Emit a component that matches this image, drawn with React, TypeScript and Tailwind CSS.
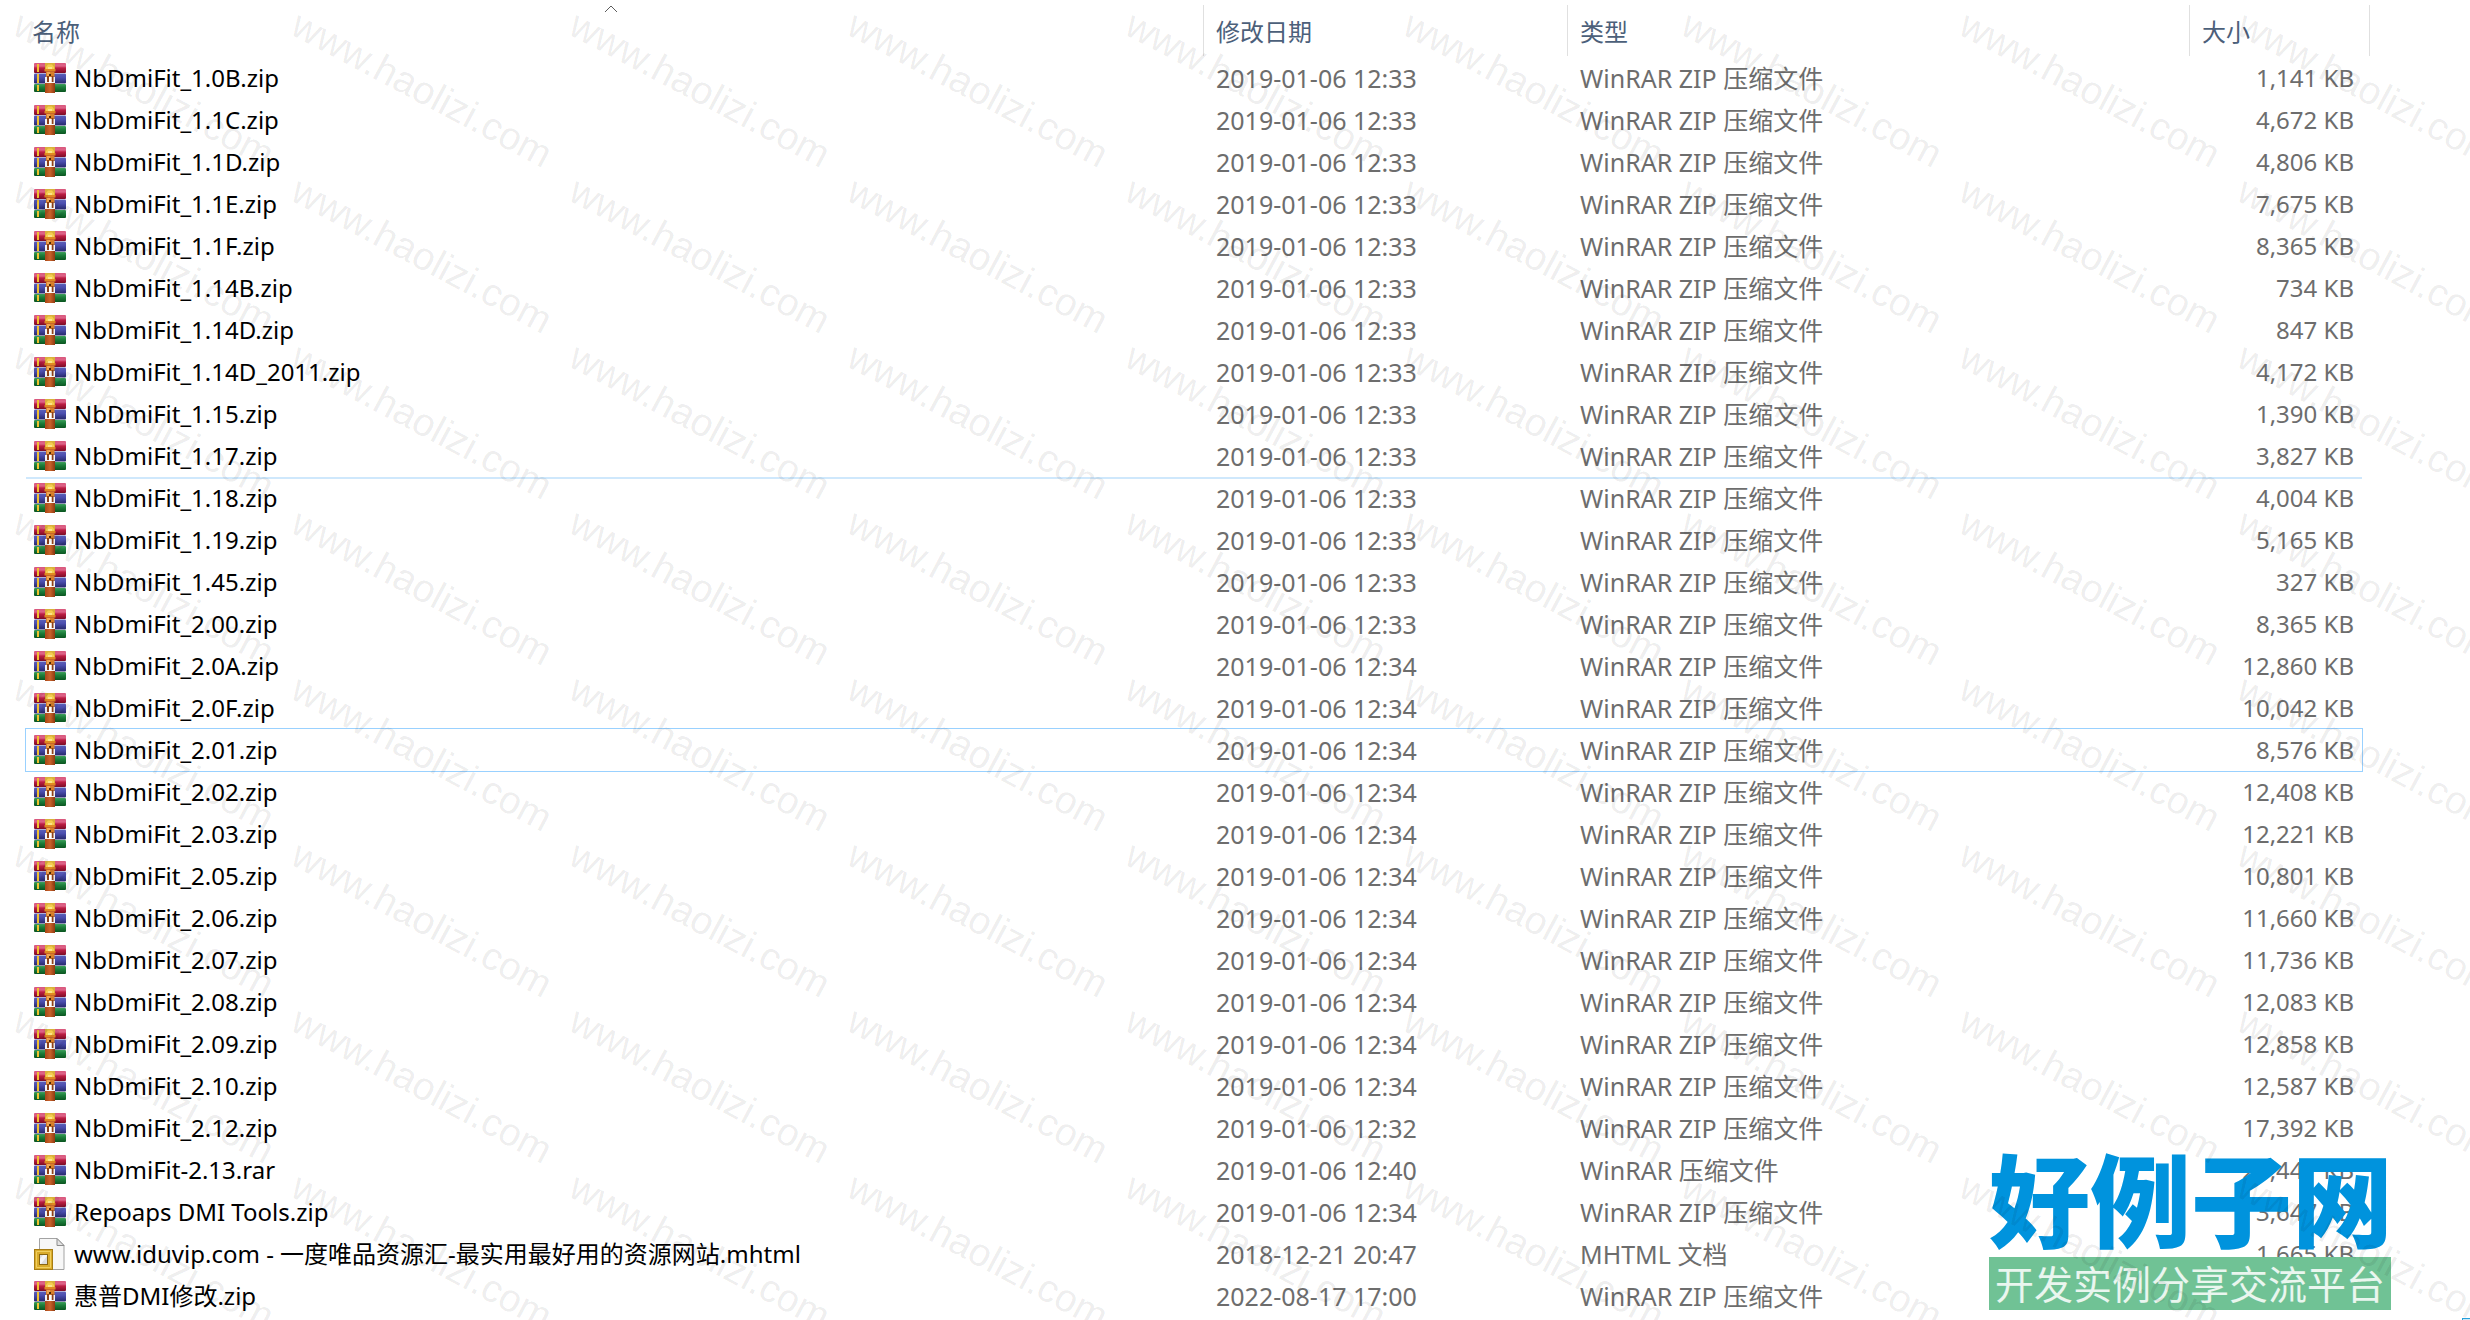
import React from 'react';

type FileKind = 'archive' | 'mhtml';

interface FileEntry {
    name: string;
    date: string;
    type: string;
    size: string;
    kind?: FileKind;
}

const ZIP = 'WinRAR ZIP 压缩文件';

const files: FileEntry[] = [
    { name: 'NbDmiFit_1.0B.zip', date: '2019-01-06 12:33', type: ZIP, size: '1,141 KB' },
    { name: 'NbDmiFit_1.1C.zip', date: '2019-01-06 12:33', type: ZIP, size: '4,672 KB' },
    { name: 'NbDmiFit_1.1D.zip', date: '2019-01-06 12:33', type: ZIP, size: '4,806 KB' },
    { name: 'NbDmiFit_1.1E.zip', date: '2019-01-06 12:33', type: ZIP, size: '7,675 KB' },
    { name: 'NbDmiFit_1.1F.zip', date: '2019-01-06 12:33', type: ZIP, size: '8,365 KB' },
    { name: 'NbDmiFit_1.14B.zip', date: '2019-01-06 12:33', type: ZIP, size: '734 KB' },
    { name: 'NbDmiFit_1.14D.zip', date: '2019-01-06 12:33', type: ZIP, size: '847 KB' },
    { name: 'NbDmiFit_1.14D_2011.zip', date: '2019-01-06 12:33', type: ZIP, size: '4,172 KB' },
    { name: 'NbDmiFit_1.15.zip', date: '2019-01-06 12:33', type: ZIP, size: '1,390 KB' },
    { name: 'NbDmiFit_1.17.zip', date: '2019-01-06 12:33', type: ZIP, size: '3,827 KB' },
    { name: 'NbDmiFit_1.18.zip', date: '2019-01-06 12:33', type: ZIP, size: '4,004 KB' },
    { name: 'NbDmiFit_1.19.zip', date: '2019-01-06 12:33', type: ZIP, size: '5,165 KB' },
    { name: 'NbDmiFit_1.45.zip', date: '2019-01-06 12:33', type: ZIP, size: '327 KB' },
    { name: 'NbDmiFit_2.00.zip', date: '2019-01-06 12:33', type: ZIP, size: '8,365 KB' },
    { name: 'NbDmiFit_2.0A.zip', date: '2019-01-06 12:34', type: ZIP, size: '12,860 KB' },
    { name: 'NbDmiFit_2.0F.zip', date: '2019-01-06 12:34', type: ZIP, size: '10,042 KB' },
    { name: 'NbDmiFit_2.01.zip', date: '2019-01-06 12:34', type: ZIP, size: '8,576 KB' },
    { name: 'NbDmiFit_2.02.zip', date: '2019-01-06 12:34', type: ZIP, size: '12,408 KB' },
    { name: 'NbDmiFit_2.03.zip', date: '2019-01-06 12:34', type: ZIP, size: '12,221 KB' },
    { name: 'NbDmiFit_2.05.zip', date: '2019-01-06 12:34', type: ZIP, size: '10,801 KB' },
    { name: 'NbDmiFit_2.06.zip', date: '2019-01-06 12:34', type: ZIP, size: '11,660 KB' },
    { name: 'NbDmiFit_2.07.zip', date: '2019-01-06 12:34', type: ZIP, size: '11,736 KB' },
    { name: 'NbDmiFit_2.08.zip', date: '2019-01-06 12:34', type: ZIP, size: '12,083 KB' },
    { name: 'NbDmiFit_2.09.zip', date: '2019-01-06 12:34', type: ZIP, size: '12,858 KB' },
    { name: 'NbDmiFit_2.10.zip', date: '2019-01-06 12:34', type: ZIP, size: '12,587 KB' },
    { name: 'NbDmiFit_2.12.zip', date: '2019-01-06 12:32', type: ZIP, size: '17,392 KB' },
    { name: 'NbDmiFit-2.13.rar', date: '2019-01-06 12:40', type: 'WinRAR 压缩文件', size: '21,441 KB' },
    { name: 'Repoaps DMI Tools.zip', date: '2019-01-06 12:34', type: ZIP, size: '3,647 KB' },
    { name: 'www.iduvip.com - 一度唯品资源汇-最实用最好用的资源网站.mhtml', date: '2018-12-21 20:47', type: 'MHTML 文档', size: '1,665 KB', kind: 'mhtml' },
    { name: '惠普DMI修改.zip', date: '2022-08-17 17:00', type: ZIP, size: '' },
];

// Row with the keyboard focus, and the row the pointer has just left
const FOCUSED = 'NbDmiFit_2.01.zip';
const MARKED = 'NbDmiFit_1.17.zip';

function ArchiveIcon() {
    return (
        <svg viewBox="0 0 32 30" className="h-[30px] w-8 shrink-0" aria-hidden="true">
            <defs>
                <linearGradient id="bookRed" x1="0" y1="0" x2="0" y2="1">
                    <stop offset="0" stopColor="#d9577c" />
                    <stop offset="0.3" stopColor="#dd6488" />
                    <stop offset="0.5" stopColor="#bd1f45" />
                    <stop offset="1" stopColor="#7d0c25" />
                </linearGradient>
                <linearGradient id="bookBlue" x1="0" y1="0" x2="0" y2="1">
                    <stop offset="0" stopColor="#5c60b8" />
                    <stop offset="0.4" stopColor="#4b4eae" />
                    <stop offset="1" stopColor="#26276b" />
                </linearGradient>
                <linearGradient id="bookGreen" x1="0" y1="0" x2="0" y2="1">
                    <stop offset="0" stopColor="#3f9f5c" />
                    <stop offset="0.4" stopColor="#1d7f3c" />
                    <stop offset="1" stopColor="#0a5520" />
                </linearGradient>
                <linearGradient id="strap" x1="0" y1="0" x2="1" y2="0">
                    <stop offset="0" stopColor="#a8481a" />
                    <stop offset="0.5" stopColor="#c9632a" />
                    <stop offset="1" stopColor="#8f3a12" />
                </linearGradient>
            </defs>
            <rect x="0" y="0" width="32" height="10" rx="1" fill="url(#bookRed)" />
            <rect x="0" y="10.500" width="32" height="10" rx="1" fill="url(#bookBlue)" />
            <rect x="0" y="21" width="32" height="8" rx="1" fill="url(#bookGreen)" />
            <path d="M3 1h2v8H3zM3 11h2v9H3zM3 22h2v6H3z" fill="#f2c230" />
            <rect x="11" y="0" width="10" height="6" fill="#d9b13a" />
            <path d="M12 6V4l2-2.500h4L20 4v2z" fill="#f5cd4e" />
            <path d="M14 4h4v2h-4z" fill="#fbe38a" />
            <path d="M10.500 6h11v2.500h-11z" fill="#e08a22" />
            <path d="M12 8.500h8.500V14H12z" fill="#d8802b" />
            <path d="M13 9h3v4h-3z" fill="#f0a552" />
            <rect x="15" y="11" width="2" height="2" fill="#4a2508" />
            <rect x="11" y="20" width="10" height="10" fill="url(#strap)" />
            <path d="M11 14h10v6H11z" fill="#f4f4f4" />
            <path d="M13 13h2v6h-2zM17.500 13h2v6h-2z" fill="#8f4218" />
            <path d="M15 14h2.500v6H15z" fill="#ffffff" />
        </svg>
    );
}

function MhtmlIcon() {
    return (
        <svg viewBox="0 0 32 32" className="h-8 w-8 shrink-0" aria-hidden="true">
            <path d="M5.500 .5H23l7 7v24H5.500z" fill="#f7f7f7" stroke="#a3a3a3" />
            <path d="M23 .5v7h7z" fill="#e2e2e2" stroke="#8c8c8c" />
            <rect x="0.500" y="11.500" width="18" height="20" fill="#d9ab2b" stroke="#a67c13" />
            <path d="M2.500 13.500h14v16h-14z" fill="none" stroke="#f0cf5e" />
            <rect x="5.500" y="16.500" width="8" height="10" fill="#dcdcdc" stroke="#8a6610" />
            <path d="M7 26l6-8v-1H9l-3 4v5z" fill="#f5f5f5" />
        </svg>
    );
}

function Column({ label, sorted, last }: { label: string; sorted?: boolean; last?: boolean }) {
    return (
        <th scope="col" className="relative p-0 text-left font-normal">
            {sorted && (
                <span className="absolute top-[5px] right-2 left-0 flex justify-center">
                    <svg viewBox="0 0 14 8" className="h-2 w-3.5" aria-hidden="true">
                        <path d="M1 7l6-6 6 6" fill="none" stroke="#5c5c5c" />
                    </svg>
                </span>
            )}
            <button className={`block h-[57px] w-full pt-1.5 text-left text-[24px] text-[#4c607a] ${sorted ? 'pl-1.5' : 'pl-3'}`}>{label}</button>
            <span className={`absolute top-[5px] h-[51px] w-px bg-[#e0e0e0] ${last ? '-right-2' : 'right-0'}`} />
        </th>
    );
}

function FileRow({ file }: { file: FileEntry }) {
    const focused = file.name === FOCUSED;
    const marked = file.name === MARKED;
    return (
        <tr className={`h-[42px] ${focused ? 'outline outline-[#99d1ff]' : ''} ${marked ? 'shadow-[0_2px_0_#cfe8fc]' : ''}`}>
            <td className="p-0 pl-2 text-[24px] text-black">
                <div className="flex items-center gap-2">
                    {file.kind === 'mhtml' ? <MhtmlIcon /> : <ArchiveIcon />}
                    {file.name}
                </div>
            </td>
            <td className="p-0 pl-3 text-[25px]">{file.date}</td>
            <td className="p-0 pl-3 text-[25px]">{file.type}</td>
            <td className="p-0 pr-2 text-right text-[24px]">{file.size}</td>
        </tr>
    );
}

function Watermark() {
    return (
        <div className="pointer-events-none absolute inset-0 grid grid-cols-[repeat(9,278px)] auto-rows-[166px] overflow-hidden pt-1 pl-[26px] select-none" aria-hidden="true">
            {Array.from({ length: 72 }, (_, i) => (
                <span key={i} className="h-10 w-max origin-top-left rotate-[28deg] font-['Liberation_Sans',sans-serif] text-[39px] leading-10 text-black/8">
                    www.haolizi.com
                </span>
            ))}
        </div>
    );
}

function SiteLogo() {
    return (
        <div className="absolute right-[79px] bottom-[10px] w-[402px] whitespace-nowrap">
            <div className="pb-1 text-[101px] leading-[104px] font-black text-[#0093dd]">好例子网</div>
            <div className="bg-[#70c295] text-center text-[39px] leading-[53px] text-white/85">开发实例分享交流平台</div>
        </div>
    );
}

export default function App() {
    return (
        <main className="relative h-screen min-h-[1320px] overflow-hidden bg-white font-['Noto_Sans','Noto_Sans_CJK_SC',sans-serif] leading-8 text-[#6d6d6d]">
            <table className="ml-[26px] w-[calc(100%-134px)] table-fixed border-collapse whitespace-nowrap">
                <colgroup>
                    <col />
                    <col className="w-[364px]" />
                    <col className="w-[622px]" />
                    <col className="w-[172px]" />
                </colgroup>
                <thead>
                    <tr>
                        <Column label="名称" sorted />
                        <Column label="修改日期" />
                        <Column label="类型" />
                        <Column label="大小" last />
                    </tr>
                </thead>
                <tbody>
                    {files.map((file) => (
                        <FileRow key={file.name} file={file} />
                    ))}
                </tbody>
            </table>
            <SiteLogo />
            {/* Top edge of the view-mode toggle in the status bar */}
            <div className="absolute right-0 bottom-0 h-0.5 w-2 border-t border-l border-[#26a0da] bg-[#cbe8f6]" />
            <Watermark />
        </main>
    );
}
